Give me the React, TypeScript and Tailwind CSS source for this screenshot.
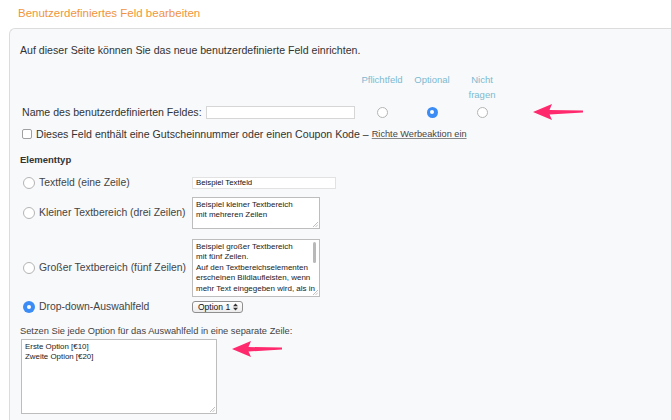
import React from "react";

function Radio({ checked = false, size = 12 }: { checked?: boolean; size?: number }) {
  if (checked) {
    return (
      <span
        className="inline-flex shrink-0 items-center justify-center rounded-full bg-[#3b8cf5]"
        style={{ width: size, height: size }}
      >
        <span className="block h-[4px] w-[4px] rounded-full bg-white" />
      </span>
    );
  }
  return (
    <span
      className="inline-block shrink-0 rounded-full border border-[#b4b4b4] bg-white"
      style={{ width: size, height: size }}
    />
  );
}

function Arrow() {
  return (
    <svg width="50" height="18" viewBox="0 0 50 18" className="shrink-0">
      <polygon points="0,9 19,1 16.5,7 50,7.6 50,9.4 16.5,11.5 19,17" fill="#ff2a6d" />
    </svg>
  );
}

function ResizeHandle() {
  return (
    <svg width="6" height="6" viewBox="0 0 6 6" className="absolute bottom-[1px] right-[1px]">
      <line x1="1" y1="6" x2="6" y2="1" stroke="#b0b0b0" strokeWidth="0.8" />
      <line x1="3.5" y1="6" x2="6" y2="3.5" stroke="#b0b0b0" strokeWidth="0.8" />
    </svg>
  );
}

export default function App() {
  return (
    <div className="h-[420px] w-[671px] overflow-hidden whitespace-nowrap bg-white font-['Liberation_Sans',Arial,Helvetica,sans-serif] text-[#333]">
      <div className="flex h-[28px] items-start pl-[18px] pt-[5px] text-[11.5px] leading-[16px] text-[#f0953c]">
        Benutzerdefiniertes Feld bearbeiten
      </div>
      <div className="ml-[9px] h-[400px] rounded-tl-[6px] border-l border-t border-[#dcdcdc] bg-[#f8f9fb] pl-[10px]">
        <div className="pt-[14px] text-[10.6px] leading-[14px] text-[#333]">
          Auf dieser Seite können Sie das neue benutzerdefinierte Feld einrichten.
        </div>

        <div className="mt-[15px] flex">
          <div className="w-[337px] shrink-0" />
          <div className="w-[50px] text-center text-[9.5px] leading-[15px] text-[#7cb9d0]">Pflichtfeld</div>
          <div className="w-[50px] text-center text-[9.5px] leading-[15px] text-[#7cb9d0]">Optional</div>
          <div className="w-[50px] text-center text-[9.5px] leading-[15px] text-[#7cb9d0]">
            Nicht
            <br />
            fragen
          </div>
        </div>

        <div className="mt-[3px] flex h-[14px] items-center">
          <div className="w-[186px] shrink-0 pl-[2px] text-[10.6px] leading-[14px] text-[#333]">
            Name des benutzerdefinierten Feldes:
          </div>
          <div className="h-[13px] w-[149px] shrink-0 border border-[#d6d6d6] bg-white" />
          <div className="ml-[2px] flex w-[50px] justify-center">
            <Radio size={11} />
          </div>
          <div className="flex w-[50px] justify-center">
            <Radio size={11} checked />
          </div>
          <div className="flex w-[50px] justify-center">
            <Radio size={11} />
          </div>
          <div className="ml-[26px] flex items-center">
            <Arrow />
          </div>
        </div>

        <div className="mt-[8px] flex h-[14px] items-center pl-[2px]">
          <span className="h-[10px] w-[10px] shrink-0 rounded-[2px] border border-[#a0a0a0] bg-white" />
          <span className="ml-[4px] text-[10.6px] leading-[14px] text-[#333]">
            Dieses Feld enthält eine Gutscheinnummer oder einen Coupon Kode –
          </span>
          <span className="ml-[3px] text-[9.2px] leading-[14px] text-[#444] underline decoration-[#888]">
            Richte Werbeaktion ein
          </span>
        </div>

        <div className="mt-[12px] text-[9.5px] font-bold leading-[14px] text-[#333]">Elementtyp</div>

        <div className="mt-[9px] flex items-center">
          <div className="flex w-[172px] shrink-0 items-center pl-[3px]">
            <Radio />
            <span className="ml-[4px] text-[10.4px] leading-[14px] text-[#444]">Textfeld (eine Zeile)</span>
          </div>
          <div className="flex h-[12px] w-[144px] items-center border border-[#e2e2e2] bg-white pl-[3px] text-[7.8px] text-[#111]">
            Beispiel Textfeld
          </div>
        </div>

        <div className="mt-[7px] flex items-center">
          <div className="flex w-[172px] shrink-0 items-center pl-[3px]">
            <Radio />
            <span className="ml-[4px] text-[10.4px] leading-[14px] text-[#444]">Kleiner Textbereich (drei Zeilen)</span>
          </div>
          <div className="relative h-[32px] w-[128px] border border-[#bdbdbd] bg-white px-[3px] pt-[2px] text-[8px] leading-[10.4px] text-[#222]">
            Beispiel kleiner Textbereich
            <br />
            mit mehreren Zeilen
            <ResizeHandle />
          </div>
        </div>

        <div className="mt-[10px] flex items-center">
          <div className="flex w-[172px] shrink-0 items-center pl-[3px]">
            <Radio />
            <span className="ml-[4px] text-[10.4px] leading-[14px] text-[#444]">Großer Textbereich (fünf Zeilen)</span>
          </div>
          <div className="relative h-[58px] w-[128px] overflow-hidden border border-[#bdbdbd] bg-white pl-[3px] pr-[8px] pt-[2px] text-[8px] leading-[10.4px] text-[#222]">
            Beispiel großer Textbereich
            <br />
            mit fünf Zeilen.
            <br />
            Auf den Textbereichselementen
            <br />
            erscheinen Bildlaufleisten, wenn
            <br />
            mehr Text eingegeben wird, als in
            <span className="absolute right-[3px] top-[2px] h-[21px] w-[3px] rounded-full bg-[#b9b9b9]" />
            <ResizeHandle />
          </div>
        </div>

        <div className="mt-[3px] flex items-center">
          <div className="flex w-[172px] shrink-0 items-center pl-[3px]">
            <Radio checked />
            <span className="ml-[4px] text-[10.4px] leading-[14px] text-[#444]">Drop-down-Auswahlfeld</span>
          </div>
          <div className="flex h-[12px] w-[51px] items-center justify-between rounded-[3px] border border-[#8f8f8f] bg-gradient-to-b from-white to-[#ececec] pl-[5px] pr-[4px] text-[8.5px] leading-[10px] text-[#111]">
            <span>Option 1</span>
            <svg width="5" height="8" viewBox="0 0 5 8">
              <polygon points="2.5,0.5 5,3.2 0,3.2" fill="#333" />
              <polygon points="2.5,7.5 5,4.8 0,4.8" fill="#333" />
            </svg>
          </div>
        </div>

        <div className="mt-[10px] text-[9.3px] leading-[14px] text-[#444]">
          Setzen Sie jede Option für das Auswahlfeld in eine separate Zeile:
        </div>

        <div className="mt-[1px] flex items-start">
          <div className="relative ml-[1px] h-[75px] w-[196px] border border-[#bdbdbd] bg-white px-[3px] pt-[2px] text-[7.9px] leading-[10.4px] text-[#222]">
            Erste Option [€10]
            <br />
            Zweite Option [€20]
            <ResizeHandle />
          </div>
          <div className="ml-[15px] mt-[1px]">
            <Arrow />
          </div>
        </div>
      </div>
    </div>
  );
}
